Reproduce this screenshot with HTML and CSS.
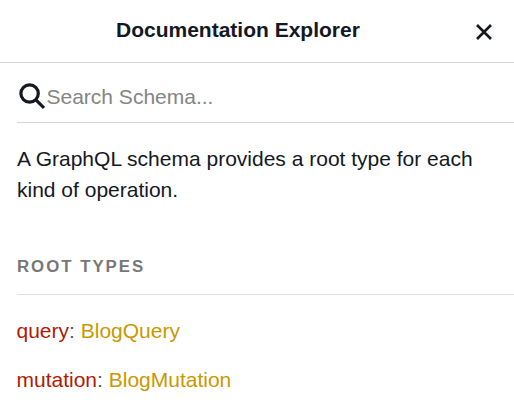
FILE: index.html
```html
<!DOCTYPE html>
<html lang="en">
<head>
<meta charset="utf-8">
<title>Documentation Explorer</title>
<link rel="stylesheet" href="styles.css">
</head>
<body>
<header class="title-bar">
<h1 class="title">Documentation Explorer</h1>
<button class="close" aria-label="Close"><svg width="18" height="18" viewBox="0 0 18 18"><path d="M2 2L16 16M16 2L2 16"/></svg></button>
</header>
<main class="content">
<label class="search">
<svg class="search-icon" width="28" height="28" viewBox="0 0 28 28"><circle cx="12.6" cy="10.5" r="8.7"/><path d="M18.7 16.6L27 24.9"/></svg>
<span class="placeholder">Search Schema...</span>
</label>
<p class="description">A GraphQL schema provides a root type for each<br>kind of operation.</p>
<h2 class="category">ROOT TYPES</h2>
<div class="item"><span class="keyword">query</span>: <a class="type">BlogQuery</a></div>
<div class="item"><span class="keyword">mutation</span>: <a class="type">BlogMutation</a></div>
</main>
</body>
</html>
```
FILE: styles.css
```css
* { box-sizing: border-box; }
body { margin: 0; background: #fff; color: #141823; font-family: "Liberation Sans", Arial, sans-serif; font-size: 21px; overflow: hidden; }
.title-bar { height: 63px; border-bottom: 1px solid #d6d6d6; display: flex; justify-content: space-between; }
.title { margin: 15px 0 0 116px; font-size: 21px; line-height: 30px; white-space: nowrap; }
.close { border: 0; background: none; padding: 23px 21px 0 0; display: flex; align-items: flex-start; }
.close svg { fill: none; stroke: #141823; stroke-width: 2.6; }
.content { padding-left: 17px; }
.search { height: 60px; border-bottom: 1px solid #d6d6d6; display: flex; align-items: center; padding-top: 8px; }
.search-icon { fill: none; stroke: #141823; stroke-width: 3.2; }
.placeholder { color: #858585; margin-left: 1.5px; }
.description { margin: 20px 0 0; line-height: 31px; white-space: nowrap; }
.category { margin: 45px 0 0; height: 45px; border-bottom: 1px solid #e0e0e0; color: #777; font-size: 16.8px; letter-spacing: 2px; line-height: 34px; }
.item { margin: 21px 0 0 -0.5px; line-height: 30px; white-space: nowrap; color: #555; }
.item + .item { margin-top: 19px; }
.keyword { color: #b11a04; }
.type { color: #ca9800; }
```
